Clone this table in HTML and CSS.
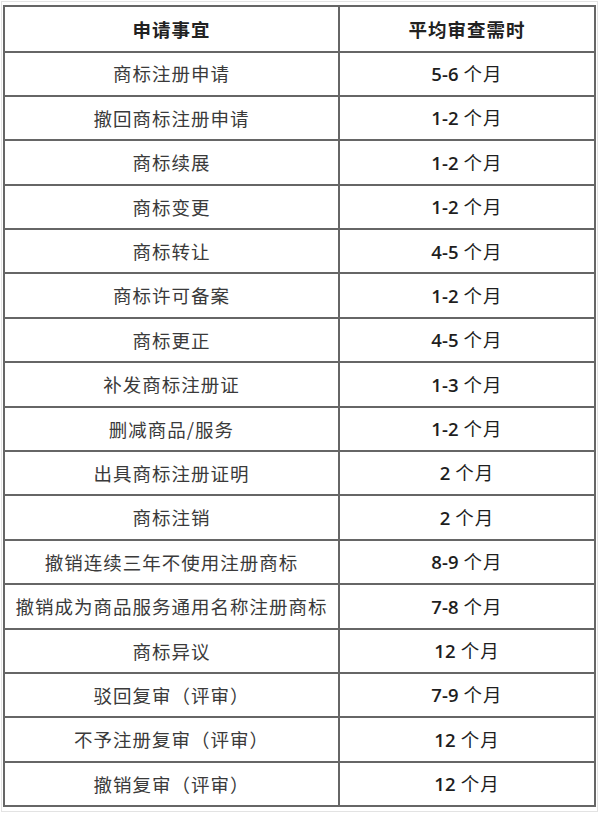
FILE: index.html
```html
<!DOCTYPE html>
<html lang="zh">
<head>
<meta charset="utf-8">
<title>商标审查时间</title>
<link rel="stylesheet" href="styles.css">
</head>
<body>
<div class="frame">
  <table class="grid">
    <colgroup><col class="c1"><col class="c2"></colgroup>
    <thead>
      <tr><th>申请事宜</th><th>平均审查需时</th></tr>
    </thead>
    <tbody>
      <tr><td>商标注册申请</td><td class="t"><span class="n">5-6</span> 个月</td></tr>
      <tr><td>撤回商标注册申请</td><td class="t"><span class="n">1-2</span> 个月</td></tr>
      <tr><td>商标续展</td><td class="t"><span class="n">1-2</span> 个月</td></tr>
      <tr><td>商标变更</td><td class="t"><span class="n">1-2</span> 个月</td></tr>
      <tr><td>商标转让</td><td class="t"><span class="n">4-5</span> 个月</td></tr>
      <tr><td>商标许可备案</td><td class="t"><span class="n">1-2</span> 个月</td></tr>
      <tr><td>商标更正</td><td class="t"><span class="n">4-5</span> 个月</td></tr>
      <tr><td>补发商标注册证</td><td class="t"><span class="n">1-3</span> 个月</td></tr>
      <tr><td>删减商品/服务</td><td class="t"><span class="n">1-2</span> 个月</td></tr>
      <tr><td>出具商标注册证明</td><td class="t"><span class="n">2</span> 个月</td></tr>
      <tr><td>商标注销</td><td class="t"><span class="n">2</span> 个月</td></tr>
      <tr><td>撤销连续三年不使用注册商标</td><td class="t"><span class="n">8-9</span> 个月</td></tr>
      <tr><td>撤销成为商品服务通用名称注册商标</td><td class="t"><span class="n">7-8</span> 个月</td></tr>
      <tr><td>商标异议</td><td class="t"><span class="n">12</span> 个月</td></tr>
      <tr><td>驳回复审（评审）</td><td class="t"><span class="n">7-9</span> 个月</td></tr>
      <tr><td>不予注册复审（评审）</td><td class="t"><span class="n">12</span> 个月</td></tr>
      <tr><td>撤销复审（评审）</td><td class="t"><span class="n">12</span> 个月</td></tr>
    </tbody>
  </table>
</div>
</body>
</html>
```
FILE: styles.css
```css
html, body {
  margin: 0;
  padding: 0;
  background: #ffffff;
}
body {
  width: 600px;
  height: 813px;
  overflow: hidden;
  font-family: "Noto Sans CJK SC", "Noto Sans", sans-serif;
}
.frame {
  box-sizing: border-box;
  width: 597px;
  height: 811px;
  margin: 1px 0 0 1px;
  border: 1px solid #e3e3e3;
  padding: 3px 2px 0 1px;
}
.grid {
  border-collapse: collapse;
  table-layout: fixed;
  width: 591px;
}
.c1 { width: 335px; }
.c2 { width: 256px; }
.grid th,
.grid td {
  border: 2px solid #666666;
  height: 42.4px;
  padding: 0;
  text-align: center;
  vertical-align: middle;
  font-size: 18.5px;
  letter-spacing: 1px;
  line-height: 1;
  color: #3a3a3a;
}
.grid th {
  height: 43.5px;
  font-weight: 700;
  color: #222222;
}
.grid td.t {
  color: #1e1e1e;
}
.n {
  font-family: "Open Sans", "Lato", sans-serif;
  font-weight: 600;
  letter-spacing: 0;
}
```
